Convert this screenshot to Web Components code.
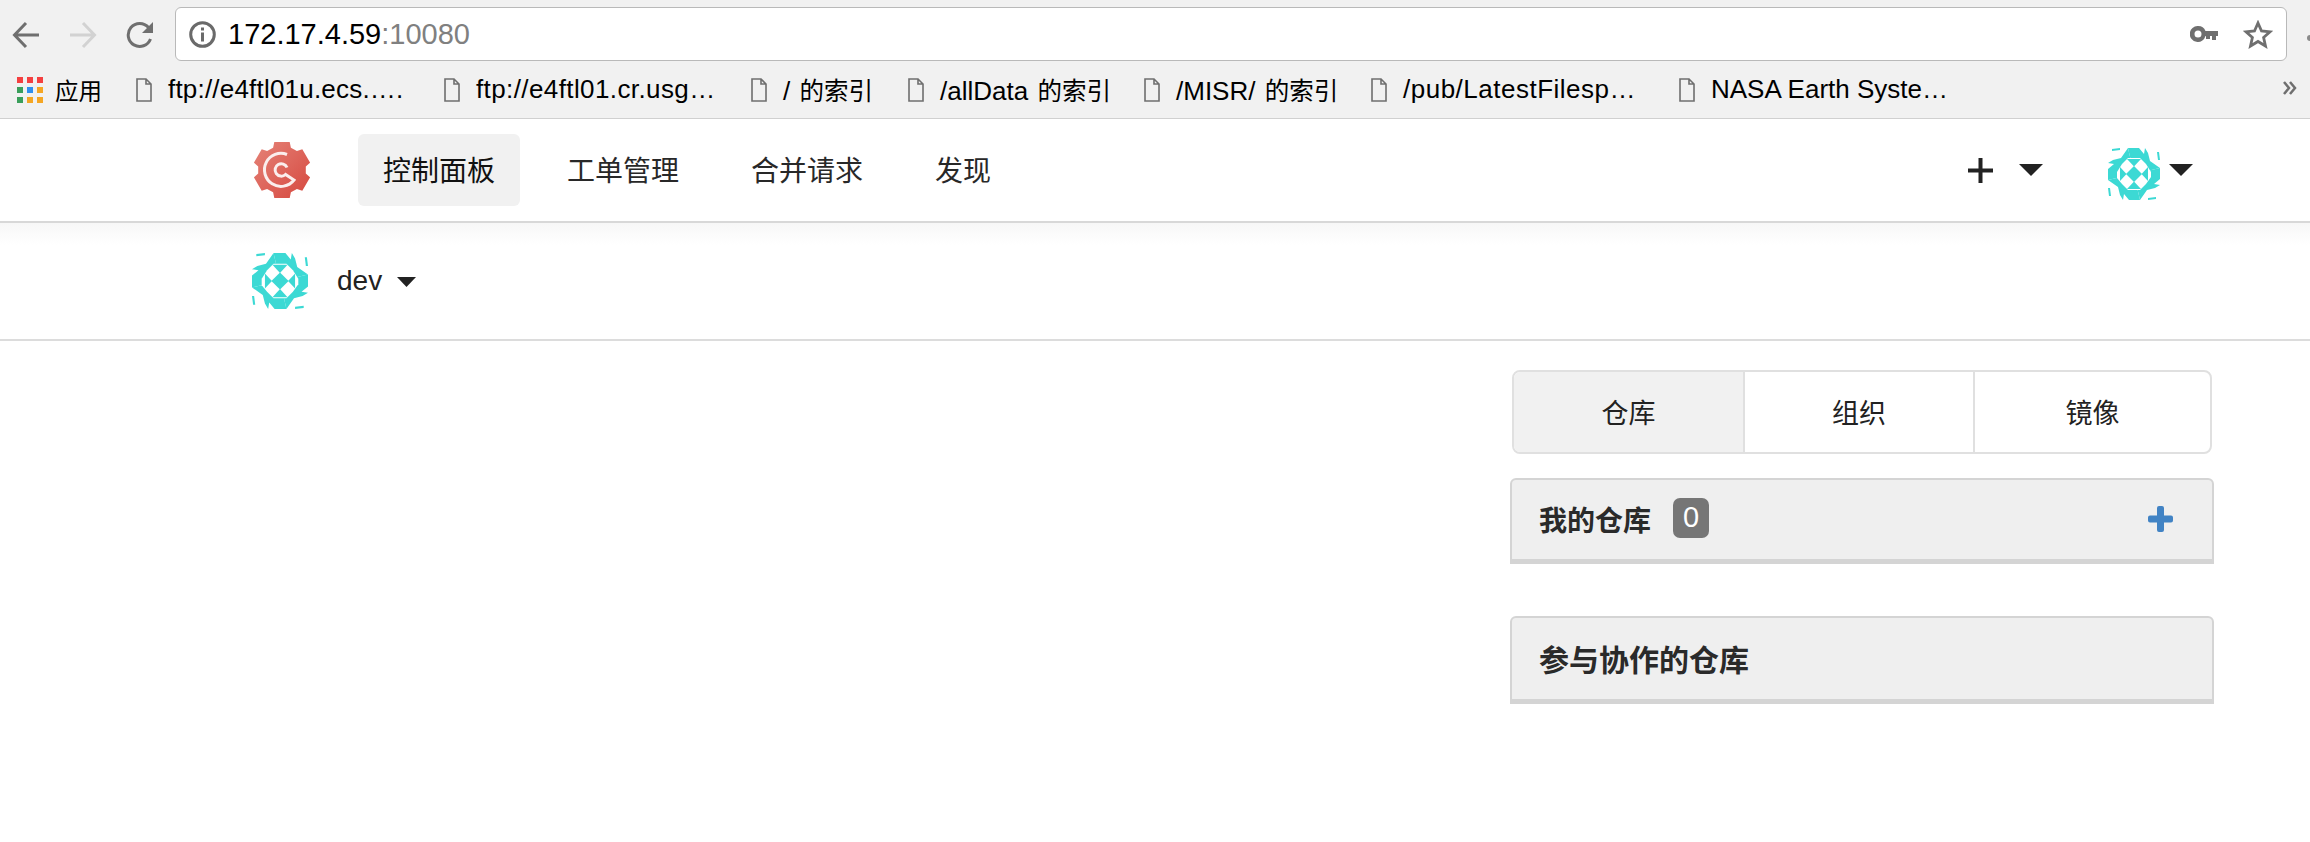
<!DOCTYPE html>
<html lang="zh">
<head>
<meta charset="utf-8">
<title>Gogs</title>
<style>
  html, body { margin: 0; background: #fff; }
  body { font-family: "Liberation Sans", "Noto Sans CJK SC", sans-serif; overflow: hidden; height: 842px; }
  .cjk { font-size: 24.5px; margin-left: 2px; }
</style>
</head>
<body>
<browser-chrome>
  <bookmark-item style="width:308px;letter-spacing:.2px">ftp://e4ftl01u.ecs.….</bookmark-item>
  <bookmark-item style="width:307px;letter-spacing:.4px">ftp://e4ftl01.cr.usg…</bookmark-item>
  <bookmark-item style="width:157px">/ <span class="cjk">的索引</span></bookmark-item>
  <bookmark-item style="width:236px">/allData <span class="cjk">的索引</span></bookmark-item>
  <bookmark-item style="width:227px">/MISR/ <span class="cjk">的索引</span></bookmark-item>
  <bookmark-item style="width:308px;letter-spacing:.5px">/pub/LatestFilesp…</bookmark-item>
  <bookmark-item>NASA Earth Syste…</bookmark-item>
</browser-chrome>
<top-nav>
  <nav-item active>控制面板</nav-item>
  <nav-item>工单管理</nav-item>
  <nav-item>合并请求</nav-item>
  <nav-item>发现</nav-item>
</top-nav>
<context-bar>dev</context-bar>
<dash-side>
  <tab-group>
    <tab-item active style="width:231px">仓库</tab-item>
    <tab-item style="width:230px">组织</tab-item>
    <tab-item style="flex:1;border-right:none">镜像</tab-item>
  </tab-group>
  <repo-panel count="0" addable style="margin-top:24px;height:86px">我的仓库</repo-panel>
  <repo-panel style="margin-top:52px;height:88px;font-size:30px">参与协作的仓库</repo-panel>
</dash-side>

<script>
  const caretSvg = `<svg width="24" height="12" viewBox="0 0 24 12"><path d="M0 0h24L12 12z" fill="#222"/></svg>`;

  class IdentAvatar extends HTMLElement {
    constructor() {
      super();
      this.attachShadow({ mode: 'open' });
      const size = this.getAttribute('size') || 52;
      const turns = [0, 90, 180, 270];
      // one quadrant of the identicon, turned four times
      const band = turns.map(t => `<g transform="rotate(${t} 26 26)">
        <polygon points="26,26 20,0 31,0 36,6 37,0 40,5 42,13 52,20"/>
        <polygon points="49,4 51,4 52,12 50,12"/>
      </g>`).join('');
      this.shadowRoot.innerHTML = `
        <style>
          :host { display: block; line-height: 0; }
        </style>
        <svg width="${size}" height="${size}" viewBox="0 0 52 52" fill="#3cd9d4">
          ${band}
          <polygon fill="#fff" points="20,10 14,16 9,24 9,30 14,36 20,42 32,42 38,36 43,29 43,24 38,16 32,10"/>
          <polygon points="26,18 34,26 26,34 18,26"/>
          <polygon points="19,11 33,11 26,18.500"/>
          <polygon points="19,41 33,41 26,33.500"/>
          <polygon points="12,19 12,33 18.500,26"/>
          <polygon points="40,19 40,33 33.500,26"/>
        </svg>`;
    }
  }
  customElements.define('ident-avatar', IdentAvatar);

  class GogsLogo extends HTMLElement {
    constructor() {
      super();
      this.attachShadow({ mode: 'open' });
      // six teeth, one pointing straight up
      const pts = [];
      for (let i = 0; i < 6; i++) {
        const a = (i * 60 - 90) * Math.PI / 180;
        const p = (r, d) => {
          const x = 28 + r * Math.cos(a + d), y = 29 + r * Math.sin(a + d);
          return x.toFixed(1) + ',' + y.toFixed(1);
        };
        pts.push(p(24, -0.38), p(29, -0.27), p(29, 0.27), p(24, 0.38));
      }
      this.shadowRoot.innerHTML = `
        <style>
          :host { display: block; line-height: 0; }
        </style>
        <svg width="56" height="58" viewBox="0 0 56 58">
          <defs>
            <linearGradient id="g" x1="0" y1="0" x2="1" y2="1">
              <stop offset="0" stop-color="#e58378"/>
              <stop offset="1" stop-color="#d6483f"/>
            </linearGradient>
          </defs>
          <polygon points="${pts.join(' ')}" fill="url(#g)"/>
          <path d="M33 13.500 A16.500 16.500 0 1 0 40 39 L31.500 33.500 A6.200 6.200 0 1 1 33 26.500" fill="none" stroke="#fbeeed" stroke-width="3"/>
        </svg>`;
    }
  }
  customElements.define('gogs-logo', GogsLogo);

  class BookmarkItem extends HTMLElement {
    constructor() {
      super();
      this.attachShadow({ mode: 'open' });
      this.shadowRoot.innerHTML = `
        <style>
          :host { display: flex; align-items: center; gap: 16px; white-space: nowrap; }
          svg { flex: none; }
        </style>
        <svg width="16" height="24" viewBox="0 0 16 24" fill="none" stroke="#6f6f6f" stroke-width="1.6">
          <path d="M1 1h9l5 5v17H1z M10 1v5h5"/>
        </svg>
        <span><slot></slot></span>`;
    }
  }
  customElements.define('bookmark-item', BookmarkItem);

  class BrowserChrome extends HTMLElement {
    constructor() {
      super();
      this.attachShadow({ mode: 'open' });
      const apps = ['#f44040','#f44040','#f44040','#3a9f5b','#2e8ff0','#f5a623','#3a9f5b','#f5a623','#f5a623'];
      this.shadowRoot.innerHTML = `
        <style>
          :host {
            display: block; height: 119px; box-sizing: border-box; position: relative;
            background: #f1f1f1; border-bottom: 1px solid #d0d0d0; color: #000;
          }
          .toolbar { display: flex; align-items: center; height: 69px; }
          .btns { display: flex; width: 175px; flex: none; padding-left: 12px; box-sizing: border-box; gap: 29px; }
          .omni {
            width: 2112px; height: 54px; margin-top: -1px; box-sizing: border-box;
            background: #fff; border: 1px solid #b9b9b9; border-radius: 6px;
            display: flex; align-items: center; padding: 0 13px;
            font-size: 29px;
          }
          .omni .port { color: #808080; }
          .omni .info { margin-right: 12px; }
          .omni .url { flex: 1; }
          .omni .key { margin-right: 25px; }
          .overflow { position: absolute; left: 2307px; top: 35px; }
          .marks {
            display: flex; align-items: center; height: 49px; font-size: 26px;
            padding-left: 17px; margin-top: -4px;
          }
          .apps { width: 119px; flex: none; display: flex; align-items: center; gap: 12px; font-size: 23.5px; }
          .grid { display: grid; grid-template-columns: repeat(3, 6px); grid-auto-rows: 6px; gap: 4px; }
          .grid i { display: block; }
          .more { position: absolute; left: 2283px; top: 81px; }
        </style>
        <div class="toolbar">
          <div class="btns">
            <svg width="28" height="28" viewBox="0 0 28 28" fill="none" stroke="#6f6f6f" stroke-width="3"><path d="M27 14H3M14 2L2.500 14 14 26"/></svg>
            <svg width="28" height="28" viewBox="0 0 28 28" fill="none" stroke="#d2d2d2" stroke-width="3"><path d="M1 14h24M14 2l11.500 12L14 26"/></svg>
            <svg width="28" height="28" viewBox="0 0 28 28" fill="none" stroke="#6f6f6f" stroke-width="3"><path d="M24.500 18A11.500 11.500 0 1 1 22.500 6.500"/><path d="M27 1v11H16z" fill="#6f6f6f" stroke="none"/></svg>
          </div>
          <div class="omni">
            <svg class="info" width="27" height="27" viewBox="0 0 27 27"><circle cx="13.500" cy="13.500" r="11.800" fill="none" stroke="#6a6a6a" stroke-width="3"/><rect x="12" y="11.500" width="3" height="9" fill="#6a6a6a"/><rect x="12" y="6.500" width="3" height="3" fill="#6a6a6a"/></svg>
            <span class="url">172.17.4.59<span class="port">:10080</span></span>
            <svg class="key" width="28" height="16" viewBox="0 0 28 16"><path fill-rule="evenodd" fill="#6f6f6f" d="M8 0a8 8 0 0 1 7.500 5H28v5h-2v4h-4v-4h-2v3h-4v-3h-.5A8 8 0 1 1 8 0zm0 4.500a3.500 3.500 0 1 0 0 7 3.500 3.500 0 0 0 0-7z"/></svg>
            <svg width="30" height="29" viewBox="0 0 30 29" fill="none" stroke="#6f6f6f" stroke-width="2.800"><path d="M15 3l3.500 8 8.500.8-6.400 5.700 1.900 8.500L15 21.500 7.500 26l1.900-8.500L3 11.800l8.500-.8z"/></svg>
          </div>
          <svg class="overflow" width="3" height="6" viewBox="0 0 3 6"><circle cx="3" cy="3" r="3" fill="#8a8a8a"/></svg>
        </div>
        <div class="marks">
          <div class="apps">
            <div class="grid">${apps.map(c => `<i style="background:${c}"></i>`).join('')}</div>
            <span>应用</span>
          </div>
          <slot></slot>
          <svg class="more" width="14" height="14" viewBox="0 0 14 14" fill="none" stroke="#6f6f6f" stroke-width="2.500"><path d="M1 1l5 6-5 6M7 1l5 6-5 6"/></svg>
        </div>`;
    }
  }
  customElements.define('browser-chrome', BrowserChrome);

  class NavItem extends HTMLElement {
    constructor() {
      super();
      this.attachShadow({ mode: 'open' });
      this.shadowRoot.innerHTML = `
        <style>
          :host {
            display: flex; align-items: center; height: 72px; box-sizing: border-box;
            padding: 0 25px 3px 25px; border-radius: 6px; margin-right: 2px;
            color: #282828; font-size: 28px; white-space: nowrap;
          }
          :host([active]) { background: #f1f1f1; color: #111; }
        </style>
        <slot></slot>`;
    }
  }
  customElements.define('nav-item', NavItem);

  class TopNav extends HTMLElement {
    constructor() {
      super();
      this.attachShadow({ mode: 'open' });
      this.shadowRoot.innerHTML = `
        <style>
          :host {
            display: flex; align-items: center; height: 104px; box-sizing: border-box;
            padding: 0 117px 0 254px; background: #fff;
            border-bottom: 2px solid #d8d8d8; position: relative;
          }
          :host::after {
            content: ""; position: absolute; left: 0; right: 0; top: calc(100% + 2px); height: 22px;
            background: linear-gradient(#f7f7f7, #fff);
          }
          .items { display: flex; gap: 20px; margin-left: 48px; }
          .right { margin-left: auto; display: flex; align-items: center; }
          .plus { margin: 0 26px 0 1px; }
          .caret { display: flex; }
          .new-caret { margin-right: 65px; }
          .user-caret { margin-left: 9px; }
          ident-avatar { margin-top: 8px; }
        </style>
        <gogs-logo></gogs-logo>
        <div class="items"><slot></slot></div>
        <div class="right">
          <svg class="plus" width="25" height="25" viewBox="0 0 25 25"><path d="M10.500 0h4v10.500H25v4H14.500V25h-4V14.500H0v-4h10.500z" fill="#222"/></svg>
          <span class="caret new-caret">${caretSvg}</span>
          <ident-avatar size="52"></ident-avatar>
          <span class="caret user-caret">${caretSvg}</span>
        </div>`;
    }
  }
  customElements.define('top-nav', TopNav);

  class ContextBar extends HTMLElement {
    constructor() {
      super();
      this.attachShadow({ mode: 'open' });
      this.shadowRoot.innerHTML = `
        <style>
          :host {
            display: flex; align-items: center; height: 118px; box-sizing: border-box;
            padding-left: 252px; border-bottom: 2px solid #dcdcdc; position: relative;
            font-size: 28px; color: #222;
          }
          .name { margin-left: 29px; }
          svg { margin-left: 15px; margin-top: 2px; }
        </style>
        <ident-avatar size="56"></ident-avatar>
        <span class="name"><slot></slot></span>
        <svg width="19" height="10" viewBox="0 0 19 10"><path d="M0 0h19L9.500 10z" fill="#222"/></svg>`;
    }
  }
  customElements.define('context-bar', ContextBar);

  class TabItem extends HTMLElement {
    constructor() {
      super();
      this.attachShadow({ mode: 'open' });
      this.shadowRoot.innerHTML = `
        <style>
          :host {
            display: flex; align-items: center; justify-content: center; box-sizing: border-box;
            padding-bottom: 2px; font-size: 27px; color: #222; border-right: 2px solid #e0e0e0;
          }
          :host([active]) { background: #f1f1f1; }
        </style>
        <slot></slot>`;
    }
  }
  customElements.define('tab-item', TabItem);

  class TabGroup extends HTMLElement {
    constructor() {
      super();
      this.attachShadow({ mode: 'open' });
      this.shadowRoot.innerHTML = `
        <style>
          :host {
            display: flex; height: 84px; box-sizing: border-box; margin: 0 2px 0 2px;
            border: 2px solid #e0e0e0; border-radius: 8px; overflow: hidden;
          }
        </style>
        <slot></slot>`;
    }
  }
  customElements.define('tab-group', TabGroup);

  class RepoPanel extends HTMLElement {
    constructor() {
      super();
      this.attachShadow({ mode: 'open' });
      const count = this.getAttribute('count');
      this.shadowRoot.innerHTML = `
        <style>
          :host {
            display: flex; align-items: center; box-sizing: border-box;
            padding: 0 27px; background: #efefef;
            border: 2px solid #d4d4d4; border-bottom-width: 5px; border-radius: 6px 6px 0 0;
            font-size: 28px; font-weight: 700; color: #2a2a2a;
          }
          .title { padding-bottom: 2px; }
          .badge {
            display: flex; align-items: center; justify-content: center;
            width: 36px; height: 40px; margin: 0 0 4px 22px; border-radius: 7px;
            background: #767676; color: #fff; font-size: 29px; font-weight: 400;
          }
          svg { margin: 0 12px 2px auto; }
        </style>
        <span class="title"><slot></slot></span>
        ${count !== null ? `<span class="badge">${count}</span>` : ''}
        ${this.hasAttribute('addable') ? `<svg width="25" height="26" viewBox="0 0 25 26"><path d="M9 2a2 2 0 0 1 2-2h3a2 2 0 0 1 2 2v7.500h7a2 2 0 0 1 2 2v3a2 2 0 0 1-2 2h-7V24a2 2 0 0 1-2 2h-3a2 2 0 0 1-2-2v-7.500H2a2 2 0 0 1-2-2v-3a2 2 0 0 1 2-2h7z" fill="#4183c4"/></svg>` : ''}`;
    }
  }
  customElements.define('repo-panel', RepoPanel);

  class DashSide extends HTMLElement {
    constructor() {
      super();
      this.attachShadow({ mode: 'open' });
      this.shadowRoot.innerHTML = `
        <style>
          :host {
            display: block; box-sizing: border-box; width: 704px;
            margin: 29px 96px 0 auto;
          }
        </style>
        <slot></slot>`;
    }
  }
  customElements.define('dash-side', DashSide);
</script>
</body>
</html>
